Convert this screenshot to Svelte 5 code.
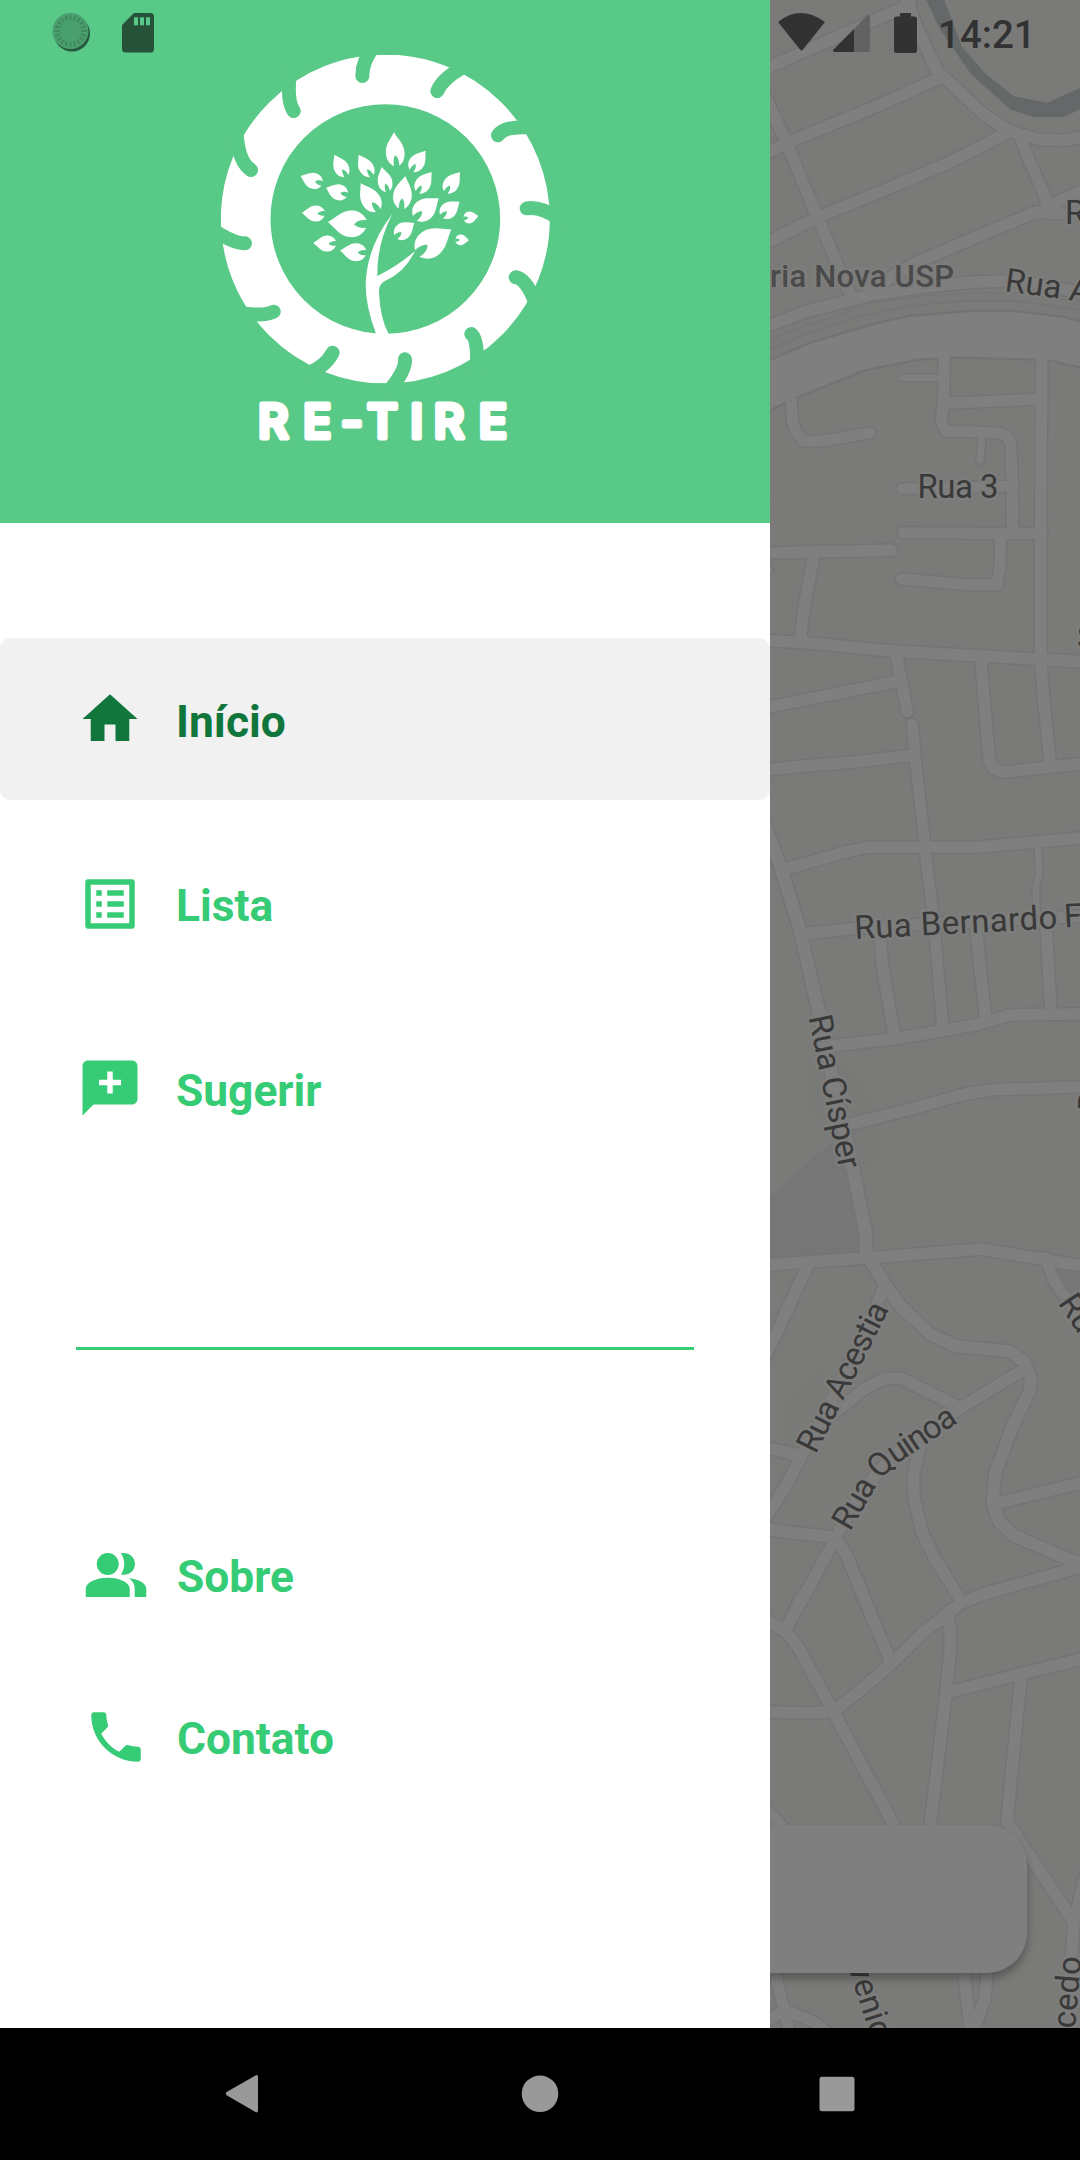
<script>
  // Streets are grouped by map tile; every tile has an origin and a unit size.
  const tiles = [
    { y: 0, sy: 0.34439, streets: [
      [11.5, '-30,219 430,22 450,8'],
      [11.5, '435,-12 480,100 532,208 560,232 675,335 735,372 770,388 840,405 915,407 975,396'],
      [11.5, '-10,461 75,417 360,304 535,228'],
      [11.5, '-10,719 170,632 375,551 560,475 620,447 740,385'],
      [11.5, '0,248 75,405 170,625 272,858'],
      [11, '783,408 862,588'],
      [11.5, '0,956 130,907 330,857 500,832 640,819 780,815 900,838 975,852'],
      [11.5, '330,842 460,766 700,667 825,617 920,619 975,619'],
      [11.5, '855,602 975,551'],
      [11, '92,1140 97,1220 108,1255 130,1281 185,1281 330,1257'],
      [11, '553,1020 551,1165 543,1220 557,1252 620,1253 715,1257 740,1266 753,1287 756,1400 758,1545'],
      [6.5, '425,1098 545,1098'],
      [11.5, '845,1020 842,1570'],
      [11, '560,1171 842,1159'],
      [7, '666,1270 660,1337'],
      [10.5, '425,1419 760,1411'],
      [11, '430,1547 846,1549'],
      [8, '20,1449 24,1449'],
    ]},
    { y: 540, sy: 0.34439, streets: [
      [11, '722,-20 720,80 710,130 620,130 425,113'],
      [11.5, '842,-10 842,350 850,450 871,650'],
      [11.5, '40,37 395,30'],
      [8, '20,84 26,84'],
      [11.5, '162,40 130,210 120,295'],
      [11.5, '0,291 150,299 400,323 640,335 860,348 975,354'],
      [11.5, '408,330 442,498'],
      [11.5, '0,490 410,411'],
      [11, '457,535 464,620 478,740 495,890 505,980 520,1090 548,1410'],
      [11.5, '0,670 100,659 300,643 465,624'],
      [11.5, '662,345 688,638 700,662 730,674 975,648'],
      [12.5, '0,790 60,945 118,1125 145,1240 180,1385 205,1500 218,1568 250,1700 278,1820 317,2010 319,2080'],
      [11.5, '72,957 240,910 320,892 660,891 975,864'],
      [11.5, '125,1144 290,1127 600,1110 975,1092'],
      [6.5, '834,885 837,970 828,1005 829,1095'],
      [11.5, '360,1140 367,1235 403,1440'],
      [11.5, '648,1125 678,1400'],
      [11.5, '858,1115 873,1375'],
      [11.5, '205,1470 420,1446 650,1407 750,1379 975,1376'],
    ]},
    { y: 1080, sy: 0.34439, streets: [
      [11.5, '260,131 440,87 620,40 700,28 975,20'],
      [11.5, '0,540 150,528 320,517 665,491 850,521 975,541'],
      [11.5, '148,528 40,755 0,830'],
      [12, '328,520 380,600 422,657 510,738 590,773 750,788 795,820 813,868 808,905 755,1010 705,1145 698,1230 718,1283 760,1322 975,1412'],
      [11.5, '368,610 340,680 215,930 125,1090 80,1175 0,1295'],
      [11.5, '0,1064 120,1090'],
      [11.5, '225,965 320,892 375,867 425,867 600,952'],
      [11.5, '225,1330 300,1200 400,1090 600,953 800,835'],
      [11.5, '482,1050 460,1150 462,1210 485,1310 525,1390 605,1515'],
      [11.5, '0,1300 60,1310 225,1328'],
      [11.5, '228,1330 80,1590'],
      [11.5, '225,1325 262,1385 345,1580'],
      [11.5, '702,1231 975,1167'],
      [11.5, '975,1410 680,1490 600,1520 550,1556'],
      [11, '855,515 880,580 930,650 995,745'],
    ]},
    { y: 1600, sy: 0.33333, streets: [
      [11.5, '600,10 560,45 487,98 390,195 290,280 222,333'],
      [11.5, '125,-10 78,87'],
      [11.5, '308,-15 392,185'],
      [11.5, '0,50 78,95 115,142 220,335 415,700'],
      [11.5, '0,335 160,339 222,333'],
      [11.5, '562,50 571,88 571,150 558,280 508,700'],
      [11.5, '560,278 790,220 975,175'],
      [11.5, '783,228 741,665 938,960'],
      [11.5, '978,820 942,965 932,1100'],
      [11, '0,607 75,690'],
      [11.5, '608,1080 632,1300'],
      [11.5, '685,1080 675,1195 637,1300'],
      [11, '38,1090 72,1228 90,1300'],
      [11, '0,1280 72,1230 160,1265 230,1320'],
    ]},
  ];

  const streets = tiles.flatMap((t) =>
    t.streets.map(([width, line]) => ({
      width,
      points: line
        .split(' ')
        .map((p) => p.split(',').map(Number))
        .map(([x, y]) => `${(x / 3 - 10).toFixed(1)},${(t.y + y * t.sy).toFixed(1)}`)
        .join(' '),
    }))
  );

  // tip x, tip y, base x, base y, width
  const leaves = [
    [582, 277, 588, 378, 56], [677, 332, 633, 392, 46], [403, 344, 438, 409, 44],
    [476, 344, 514, 409, 44], [302, 408, 366, 432, 48], [378, 443, 442, 466, 48],
    [545, 381, 562, 455, 43], [482, 430, 533, 513, 57], [616, 408, 602, 506, 56],
    [695, 396, 651, 456, 46], [780, 396, 736, 456, 46], [716, 475, 643, 533, 64],
    [779, 485, 723, 528, 48], [835, 528, 791, 535, 36], [306, 518, 374, 522, 48],
    [384, 546, 499, 555, 80], [340, 609, 408, 612, 48], [420, 631, 498, 640, 54],
    [643, 549, 586, 590, 50], [754, 568, 650, 638, 84], [807, 601, 766, 599, 32],
  ].map(([tx, ty, bx, by, w]) => {
    const len = Math.hypot(bx - tx, by - ty);
    const turn = (Math.atan2(by - ty, bx - tx) * 180) / Math.PI - 90;
    return `translate(${tx} ${ty}) rotate(${turn.toFixed(1)}) scale(${(w / 56).toFixed(3)} ${(len / 100).toFixed(3)})`;
  });

  const notches = [
    'M487 108Q487 60 524 18', 'M712 153Q730 112 800 76', 'M894 286Q912 258 990 262',
    'M980 505Q1022 499 1075 535', 'M947 712Q978 715 1007 790', 'M814 882Q834 895 831 980',
    'M615 958Q618 990 568 1052', 'M398 938Q378 978 325 1000', 'M221 815Q195 829 130 820',
    'M135 610Q100 610 40 570', 'M153 390Q117 367 110 285', 'M281 213Q262 185 268 115',
  ];

  const ticks = Array.from({ length: 20 }, (_, i) => i * 18);

  const icons = {
    home: 'M10 20v-6h4v6h5v-8h3L12 3 2 12h3v8z',
    list: 'M19 5v14H5V5h14m1.1-2H3.9c-.5 0-.9.4-.9.9v16.2c0 .4.4.9.9.9h16.2c.4 0 .9-.5.9-.9V3.9c0-.5-.5-.9-.9-.9zM11 7h6v2h-6V7zm0 4h6v2h-6v-2zm0 4h6v2h-6zM7 7h2v2H7zm0 4h2v2H7zm0 4h2v2H7z',
    suggest: 'M20 2H4c-1.1 0-1.99.9-1.99 2L2 22l4-4h14c1.1 0 2-.9 2-2V4c0-1.1-.9-2-2-2zm-4 9h-3v3h-2v-3H8V9h3V6h2v3h3v2z',
    people: 'M9 4a4 4 0 1 1 0 8 4 4 0 0 1 0-8zM9 13c4.4 0 8 1.8 8 4v3H1v-3c0-2.2 3.6-4 8-4zM13.8 4.1c2.7-.5 5.1 1.3 5.1 3.9s-2.4 4.4-5.1 3.8c1.6-2.2 1.6-5.3 0-7.7zM16.7 13.2c3.6.4 6.3 1.8 6.3 3.8v3h-4.2v-3c0-1.5-.6-2.8-2.1-3.8z',
    phone: 'M6.62 10.79c1.44 2.83 3.76 5.14 6.59 6.59l2.2-2.2c.27-.27.67-.36 1.02-.24 1.12.37 2.33.57 3.57.57.55 0 1 .45 1 1V20c0 .55-.45 1-1 1-9.39 0-17-7.61-17-17 0-.55.45-1 1-1h3.5c.55 0 1 .45 1 1 0 1.25.2 2.45.57 3.57.11.35.03.74-.25 1.02l-2.2 2.2z',
  };

  const mainItems = [
    { label: 'Início', icon: icons.home, active: true },
    { label: 'Lista', icon: icons.list },
    { label: 'Sugerir', icon: icons.suggest },
  ];
  const extraItems = [
    { label: 'Sobre', icon: icons.people },
    { label: 'Contato', icon: icons.phone },
  ];
</script>

{#snippet row(item)}
  <li class="item" class:active={item.active}>
    <svg class="icon" viewBox="0 0 24 24"><path d={item.icon} /></svg>
    <span>{item.label}</span>
  </li>
{/snippet}

<div class="screen">
  <main class="stage">
    <svg class="map" viewBox="760 0 320 2028">
      <g transform="translate(760 0) scale(.33333 .34439)">
        <path class="water" d="M498-2L540 85 635 218 752 318 820 340H910L965 316V253L862 298 762 280 675 213 605 135 552-2z" />
      </g>
      <g transform="translate(760 1080) scale(.33333 .34439)">
        <path class="block" d="M145-60V70L200 150 270 247H357V80L260-40zM60 965L180 840 240 870 150 1060H75z" />
        <path class="plot" d="M0 365L215 180 260 255 303 510 0 530zM885 545L970 562V655L925 610z" />
      </g>
      <g transform="translate(770 0)">
        {#each streets as s}
          <polyline class="edge" points={s.points} stroke-width={s.width + 3} />
        {/each}
      </g>
      <g transform="translate(760 0) scale(.33333 .34439)">
        <path class="avenue" d="M0 1058L150 995 350 938 450 917 640 902H755L910 920 975 938V1070L860 1045 575 1038 470 1045 315 1075 110 1155 75 1170 0 1207z" />
        <path class="rail" d="M0 995L330 880 500 858 640 850H740L975 877M0 1025L150 965 300 919 450 888 620 873H760L975 902" />
      </g>
      <g transform="translate(770 0)">
        {#each streets as s}
          <polyline class="road" points={s.points} stroke-width={s.width} />
        {/each}
      </g>
      <g class="names">
        <text class="place" x="770" y="286.500" textLength="184">ria Nova USP</text>
        <text x="1065" y="224">R</text>
        <text transform="translate(1004 291) rotate(8)">Rua A</text>
        <text x="917.500" y="498" textLength="81">Rua 3</text>
        <text x="1077" y="649">S</text>
        <text transform="translate(855 939) rotate(-3)" textLength="203">Rua Bernardo</text>
        <text transform="translate(1064.500 927.500) rotate(-3)">F</text>
        <text transform="translate(808.500 1017) rotate(78.600)" textLength="156">Rua Císper</text>
        <text transform="translate(1102 1111) rotate(-90)" x="0 63">Dr</text>
        <text transform="translate(1057.500 1303) rotate(56)">Ru</text>
        <text transform="translate(815.500 1455) rotate(-63.200)" textLength="164">Rua Acestia</text>
        <path id="quinoa" class="guide" d="M850 1532L874 1490Q884 1473 901 1461L968 1416" />
        <text textLength="158"><textPath href="#quinoa">Rua Quinoa</textPath></text>
        <text transform="translate(848 1967) rotate(72)">venida</text>
        <text transform="translate(1075 2029) rotate(-85)">cedo</text>
      </g>
    </svg>

    <div class="card"></div>

    <aside class="drawer">
      <header>
        <svg class="logo" viewBox="0 0 1110 1260">
          <defs><clipPath id="tyre"><rect x="63" y="45" width="987" height="985" /></clipPath></defs>
          <circle class="ring" cx="556" cy="537" r="419" clip-path="url(#tyre)" />
          {#each notches as d}<path class="notch" {d} />{/each}
          <g class="tree">
            <path d="M577 522Q530 612 532 708Q596 676 645 633Q614 698 556 722Q536 732 537 755Q540 836 567 884L529 884Q497 800 497 735Q500 620 577 522z" />
            {#each leaves as t}
              <path transform={t} d="M0 0C10 20 28 35 28 62C28 80 20 93 10 100C11 88 8 74 -1 68C-6 76-8 88-6 100C-20 93-28 80-28 60C-28 35-12 20 0 0z" />
            {/each}
          </g>
          <text class="brand" x="174 309 423 501 631 701 836" y="1193">RE-TIRE</text>
        </svg>
      </header>
      <nav>
        <ul class="main">{#each mainItems as item}{@render row(item)}{/each}</ul>
        <hr />
        <ul class="extra">{#each extraItems as item}{@render row(item)}{/each}</ul>
      </nav>
    </aside>

    <div class="status">
      <svg class="left" viewBox="0 0 170 70">
        <circle cx="72" cy="33.500" r="18" fill="#27573d" />
        <circle cx="70.500" cy="31" r="18" fill="#4a9f6f" />
        <g stroke="#40895f" stroke-width="2">
          {#each ticks as a}<path d="M70.500 15v5" transform="rotate({a} 70.500 31)" />{/each}
        </g>
        <path fill="#255239" fill-rule="evenodd" d="M134 13h16.500a3.500 3.500 0 0 1 3.500 3.500V49a3.500 3.500 0 0 1-3.500 3.500H125.500A3.500 3.500 0 0 1 122 49V25zM134 17.300v8h4v-8zM140 17.300v8h4v-8zM146 17.300v8h4v-8z" />
      </svg>
      <svg class="right" viewBox="770 0 160 70">
        <g fill="#323232">
          <path d="M778 22Q800 4 825 22L803 49.500Q801.500 51.500 800 49.500z" />
          <path d="M854 29V52H834.500Q832 52 833.500 49.500z" />
          <path d="M900 13h11v3.500h3.500a2.500 2.500 0 0 1 2.500 2.500v31.500a2.500 2.500 0 0 1-2.500 2.500h-18a2.500 2.500 0 0 1-2.500-2.500V19a2.500 2.500 0 0 1 2.500-2.500h3.500z" />
        </g>
        <path fill="#626262" d="M854 29L866.500 16Q870 13.500 870 17V50a2 2 0 0 1-2 2H854z" />
      </svg>
      <time>14:21</time>
    </div>
  </main>

  <footer>
    <svg viewBox="0 0 1080 132">
      <path d="M255.500 47.500Q258 46 258 49V82Q258 85.500 255.500 84L227 67.500Q224.500 65.500 227 63.800z" />
      <circle cx="540" cy="65.800" r="18.300" />
      <rect x="819.500" y="48.800" width="35" height="34.500" rx="2.500" />
    </svg>
  </footer>
</div>

<style>
  :global(body) {
    margin: 0;
    background: #000;
  }
  .screen {
    width: 1080px;
    height: 2160px;
    display: grid;
    grid-template-rows: 2028px 132px;
    overflow: hidden;
    font-family: Roboto, 'Liberation Sans', sans-serif;
  }
  .stage {
    display: grid;
    grid-template: 2028px / 1080px;
    overflow: hidden;
    background: #7a7a78;
  }
  .stage > * {
    grid-area: 1 / 1;
  }
  .map {
    width: 320px;
    height: 2028px;
    justify-self: end;
  }
  .water { fill: #646868; }
  .plot { fill: #767677; }
  .block { fill: #797977; }
  .edge, .road {
    fill: none;
    stroke-linecap: round;
    stroke-linejoin: round;
  }
  .edge { stroke: #737574; }
  .road { stroke: #7f7f7f; }
  .avenue {
    fill: #7f7f7f;
    stroke: #727473;
    stroke-width: 7;
  }
  .rail {
    fill: none;
    stroke: #737574;
    stroke-width: 3;
  }
  .guide { fill: none; }
  .names text {
    font-size: 33px;
    fill: #393939;
    stroke: #7d7d7c;
    stroke-width: 5px;
    stroke-linejoin: round;
    paint-order: stroke;
  }
  .names .place {
    font-size: 31px;
    font-weight: 500;
    fill: #4a4a4a;
  }
  .card {
    align-self: start;
    width: 1027px;
    height: 148px;
    margin-top: 1825px;
    border-radius: 40px;
    background: #7f7f7f;
    box-shadow: 0 6px 9px rgba(0, 0, 0, 0.28);
  }
  .drawer {
    width: 770px;
    background: #fff;
    z-index: 1;
  }
  header {
    box-sizing: border-box;
    height: 523px;
    padding: 40px 0 0 200px;
    background: #59c988;
  }
  .logo {
    display: block;
    width: 370px;
    height: 420px;
  }
  .ring {
    fill: none;
    stroke: #fff;
    stroke-width: 149;
  }
  .notch {
    fill: none;
    stroke: #59c988;
    stroke-width: 42;
    stroke-linecap: round;
  }
  .tree { fill: #fff; }
  .brand {
    font: 500 141px Inter, sans-serif;
    fill: #fff;
    stroke: #fff;
    stroke-width: 15;
    stroke-linejoin: round;
  }
  nav {
    display: flex;
    flex-direction: column;
    padding-top: 115px;
  }
  ul {
    margin: 0;
    padding: 0;
    list-style: none;
    display: flex;
    flex-direction: column;
  }
  .main { gap: 22.5px; }
  .item {
    box-sizing: border-box;
    height: 162px;
    padding-left: 77px;
    display: flex;
    align-items: center;
    gap: 33px;
    border-radius: 11px;
    font-size: 44.3px;
    font-weight: 700;
    line-height: 52px;
    color: #36cb75;
  }
  .item span { padding-top: 5px; }
  .item.active {
    background: #f1f1f1;
    color: #11763c;
  }
  .icon {
    width: 66px;
    height: 66px;
    fill: currentColor;
  }
  hr {
    width: 618px;
    height: 3px;
    margin: 178px 0 144px 76px;
    border: 0;
    background: #36cb75;
  }
  .extra .item {
    padding-left: 83px;
    gap: 28px;
  }
  .extra .item span { padding-top: 3px; }
  .status {
    display: flex;
    align-items: flex-start;
    height: 70px;
    z-index: 2;
  }
  .left {
    width: 170px;
    height: 70px;
    margin-right: 600px;
  }
  .right {
    width: 160px;
    height: 70px;
  }
  time {
    margin: 12px 0 0 8px;
    font-size: 38.5px;
    line-height: 46px;
    font-weight: 500;
    color: #323232;
  }
  footer { background: #000; }
  footer svg {
    display: block;
    fill: #999;
  }
</style>
